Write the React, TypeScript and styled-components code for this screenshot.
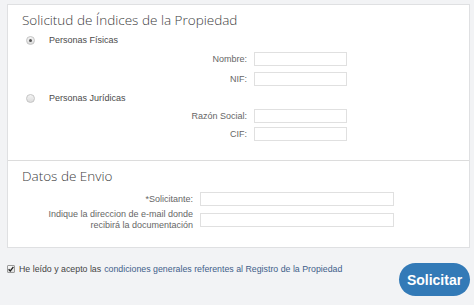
import React from "react";
import styled, { createGlobalStyle } from "styled-components";

const GlobalStyle = createGlobalStyle`
  html, body {
    margin: 0;
    padding: 0;
    background: #f2f3f5;
  }
  #root {
    min-height: 305px;
  }
`;

const Page = styled.div`
  width: 474px;
  height: 305px;
  box-sizing: border-box;
  padding: 4px 4px 0 7px;
  background: #f2f3f5;
  font-family: "Liberation Sans", Arial, sans-serif;
  color: #555;
`;

const Panel = styled.div`
  background: #fff;
  border: 1px solid #dfe0e2;
`;

const Section = styled.div<{ $divider?: boolean; $bottom: number }>`
  padding: 6px 0 ${(p) => p.$bottom}px 14px;
  border-top: ${(p) => (p.$divider ? "1px solid #dcdcdc" : "none")};
`;

const Title = styled.div`
  font-family: "Open Sans", sans-serif;
  font-weight: 300;
  font-size: 13.5px;
  line-height: 18px;
  color: #3c3c3c;
`;

const RadioRow = styled.label<{ $top: number }>`
  display: flex;
  align-items: center;
  height: 12px;
  margin-top: ${(p) => p.$top}px;
  padding-left: 4px;
  font-size: 9px;
  color: #4a4a4a;
`;

const Radio = styled.span<{ $checked?: boolean }>`
  position: relative;
  width: 7px;
  height: 7px;
  border-radius: 50%;
  border: 1px solid #c4c4c4;
  background: linear-gradient(#f4f4f4, #dcdcdc);
  margin-right: 14px;
  &::after {
    content: "";
    display: ${(p) => (p.$checked ? "block" : "none")};
    position: absolute;
    left: 2px;
    top: 2px;
    width: 3px;
    height: 3px;
    border-radius: 50%;
    background: #555;
  }
`;

const Fields = styled.div<{ $top: number; $labelWidth: number; $inputWidth: number; $gap: number }>`
  display: grid;
  grid-template-columns: ${(p) => p.$labelWidth}px ${(p) => p.$inputWidth}px;
  column-gap: 7px;
  row-gap: ${(p) => p.$gap}px;
  align-items: center;
  margin-top: ${(p) => p.$top}px;
`;

const Label = styled.div`
  text-align: right;
  font-size: 9px;
  line-height: 11px;
  color: #666;
`;

const Input = styled.input`
  box-sizing: border-box;
  width: 100%;
  height: 14px;
  margin: 0;
  padding: 0 3px;
  border: 1px solid #e0e0e0;
  background: #fff;
  font-size: 9px;
  outline: none;
`;

const Footer = styled.div`
  display: flex;
  justify-content: space-between;
  align-items: flex-start;
  padding-top: 15px;
`;

const Accept = styled.label`
  display: flex;
  align-items: center;
  font-size: 8.8px;
  line-height: 12px;
  color: #444;
`;

const Check = styled.span`
  display: inline-flex;
  align-items: center;
  justify-content: center;
  box-sizing: border-box;
  width: 8px;
  height: 8px;
  margin-right: 4px;
  border: 1px solid #9a9a9a;
  border-radius: 1px;
  background: linear-gradient(#fafafa, #dedede);
  svg {
    display: block;
  }
`;

const Link = styled.a`
  color: #41608a;
  text-decoration: none;
  margin-left: 3px;
`;

const Button = styled.button`
  width: 71px;
  height: 33px;
  margin: 0;
  border: none;
  border-radius: 17px;
  background: #337ab7;
  color: #fff;
  font-family: "Liberation Sans", Arial, sans-serif;
  font-weight: bold;
  font-size: 14px;
  cursor: pointer;
`;

export default function App() {
  return (
    <>
      <GlobalStyle />
      <Page>
        <Panel>
          <Section $bottom={19}>
            <Title>Solicitud de Índices de la Propiedad</Title>
            <RadioRow $top={5}>
              <Radio $checked />
              Personas Físicas
            </RadioRow>
            <Fields $top={6} $labelWidth={225} $inputWidth={93} $gap={6}>
              <Label>Nombre:</Label>
              <Input />
              <Label>NIF:</Label>
              <Input />
            </Fields>
            <RadioRow $top={6}>
              <Radio />
              Personas Jurídicas
            </RadioRow>
            <Fields $top={5} $labelWidth={225} $inputWidth={93} $gap={4}>
              <Label>Razón Social:</Label>
              <Input />
              <Label>CIF:</Label>
              <Input />
            </Fields>
          </Section>
          <Section $divider $bottom={16}>
            <Title>Datos de Envio</Title>
            <Fields $top={7} $labelWidth={171} $inputWidth={194} $gap={3}>
              <Label>*Solicitante:</Label>
              <Input />
              <Label>
                Indique la direccion de e-mail donde
                <br />
                recibirá la documentación
              </Label>
              <Input />
            </Fields>
          </Section>
        </Panel>
        <Footer>
          <Accept>
            <Check>
              <svg width="6" height="6" viewBox="0 0 6 6">
                <path d="M0.6 3.2 L2.3 4.9 L5.4 0.9" fill="none" stroke="#222" strokeWidth="1.3" />
              </svg>
            </Check>
            He leído y acepto las
            <Link href="#">condiciones generales referentes al Registro de la Propiedad</Link>
          </Accept>
          <Button>Solicitar</Button>
        </Footer>
      </Page>
    </>
  );
}
